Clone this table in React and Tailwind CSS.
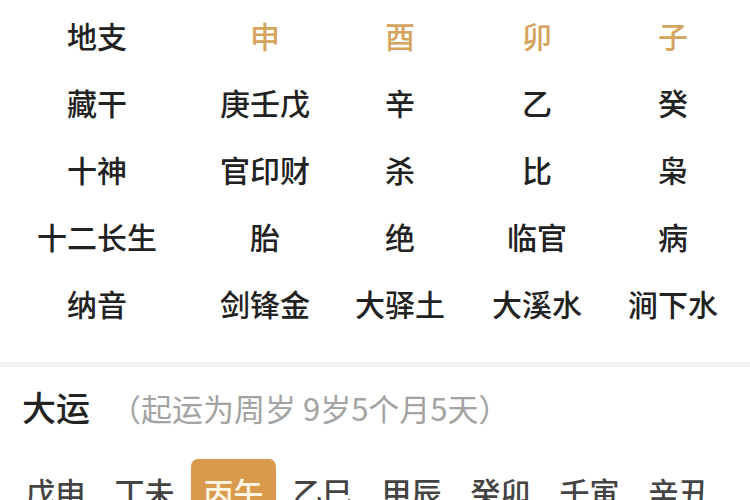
import React from 'react';

const rows = [
  { label: '地支', cells: ['申', '酉', '卯', '子'], gold: true },
  { label: '藏干', cells: ['庚壬戊', '辛', '乙', '癸'] },
  { label: '十神', cells: ['官印财', '杀', '比', '枭'] },
  { label: '十二长生', cells: ['胎', '绝', '临官', '病'] },
  { label: '纳音', cells: ['剑锋金', '大驿土', '大溪水', '涧下水'] },
];

const dayun = ['戊申', '丁未', '丙午', '乙巳', '甲辰', '癸卯', '壬寅', '辛丑'];

export default function App() {
  return (
    <div
      className="w-[750px] h-[500px] overflow-hidden bg-white"
      style={{ fontFamily: '"Noto Sans CJK SC", "Noto Sans", sans-serif' }}
    >
      {/* Pillar table */}
      <div className="pt-[1px] h-[362px]">
        {rows.map((row) => (
          <div
            key={row.label}
            className="grid grid-cols-[194px_142px_128px_146px_126px] h-[67px] items-center text-[30px] leading-none font-medium text-[#222]"
          >
            <div className="text-center">{row.label}</div>
            {row.cells.map((c, i) => (
              <div key={i} className={`text-center ${row.gold ? 'text-[#d4a35c]' : ''}`}>
                {c}
              </div>
            ))}
          </div>
        ))}
      </div>

      {/* Divider */}
      <div className="h-[5px] bg-[#f3f3f5]" />

      {/* 大运 */}
      <div className="flex items-center h-[80px] pl-[22px]">
        <span className="text-[34px] leading-none font-medium text-[#222]">大运</span>
        <span className="ml-[20px] text-[31px] leading-none text-[#a3a3a3]">（起运为周岁 9岁5个月5天）</span>
      </div>

      <div className="flex pl-[11px] pt-[12px]">
        {dayun.map((d) => (
          <div key={d} className="w-[89px] flex justify-center">
            {d === '丙午' ? (
              <div className="w-[85px] h-[64px] rounded-[7px] bg-[#d99a4d] text-[#fff6e6] text-[30px] leading-none font-medium flex items-center justify-center">
                {d}
              </div>
            ) : (
              <div className="h-[64px] text-[30px] leading-none font-medium text-[#444] flex items-center">{d}</div>
            )}
          </div>
        ))}
      </div>
    </div>
  );
}
